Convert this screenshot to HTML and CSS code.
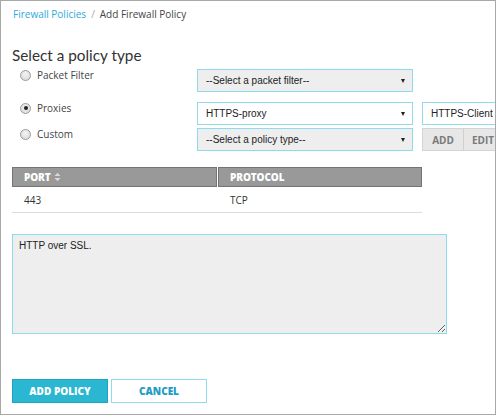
FILE: index.html
```html
<!DOCTYPE html>
<html>
<head>
<meta charset="utf-8">
<link rel="stylesheet" href="styles.css">
</head>
<body>
<div class="frame">
  <nav class="crumbs"><a class="crumb-link">Firewall Policies</a><span class="crumb-sep">/</span><span class="crumb-current">Add Firewall Policy</span></nav>
  <h1 class="title">Select a policy type</h1>
  <div class="policy">
    <div class="prow prow-1">
      <label class="radio-row"><span class="radio"></span><span class="radio-label">Packet Filter</span></label>
      <div class="select select-gray"><span>--Select a packet filter--</span><span class="caret"></span></div>
    </div>
    <div class="prow prow-2">
      <label class="radio-row"><span class="radio checked"></span><span class="radio-label">Proxies</span></label>
      <div class="select"><span>HTTPS-proxy</span><span class="caret"></span></div>
      <div class="text-input">HTTPS-Client</div>
    </div>
    <div class="prow prow-3">
      <label class="radio-row"><span class="radio"></span><span class="radio-label">Custom</span></label>
      <div class="select select-gray"><span>--Select a policy type--</span><span class="caret"></span></div>
      <div class="btn-group"><span class="small-btn">ADD</span><span class="small-btn">EDIT</span></div>
    </div>
  </div>

  <div class="table">
    <div class="thead">
      <div class="th th-port">PORT <span class="sort"><svg width="7" height="10" viewBox="0 0 7 10"><path d="M0.5 4 L3.5 0.8 L6.5 4 Z" fill="#d8d8d8"/><path d="M0.5 6 L3.5 9.2 L6.5 6 Z" fill="#d8d8d8"/></svg></span></div>
      <div class="th th-proto">PROTOCOL</div>
    </div>
    <div class="tr">
      <div class="td td-port">443</div>
      <div class="td td-proto">TCP</div>
    </div>
  </div>

  <textarea class="desc">HTTP over SSL.</textarea>

  <div class="actions">
    <button class="btn btn-primary">ADD POLICY</button>
    <button class="btn btn-secondary">CANCEL</button>
  </div>
</div>
</body>
</html>
```

FILE: styles.css
```css
* { box-sizing: border-box; }
html, body { margin: 0; padding: 0; background: #fff; }
body { width: 497px; height: 416px; overflow: hidden; }

.frame {
  width: 496px;
  height: 415px;
  border: 1px solid #a8a8a8;
  padding: 5px 0 0 11px;
  overflow: hidden;
  font-family: "Open Sans", "Liberation Sans", sans-serif;
  color: #333;
}

.crumbs {
  font-size: 10px;
  line-height: 16px;
  padding-left: 1px;
  display: flex;
  white-space: nowrap;
}
.crumb-link { color: #2ea8d8; }
.crumb-sep { color: #aaa; margin: 0 5px 0 5px; }
.crumb-current { color: #444; }

.title {
  margin: 23px 0 0 0;
  font-family: Lato, "Open Sans", sans-serif;
  font-weight: 400;
  font-size: 15.3px;
  line-height: 20px;
  color: #333;
  height: 20px;
}

.policy {
  margin-top: 4px;
  display: flex;
  flex-direction: column;
}
.prow {
  display: flex;
  align-items: flex-start;
  gap: 9px;
  height: 23px;
}
.prow-2 { margin-top: 10px; }
.prow-3 { margin-top: 3px; }

.radio-row {
  flex: none;
  width: 176px;
  display: flex;
  align-items: center;
  padding-left: 8px;
  height: 12px;
}
.radio {
  width: 11px;
  height: 11px;
  border-radius: 50%;
  border: 1px solid #9a9a9a;
  background: radial-gradient(circle at 50% 35%, #f4f4f4 0%, #d6d6d6 100%);
  position: relative;
  flex: none;
}
.radio.checked::after {
  content: "";
  position: absolute;
  left: 2.5px;
  top: 2.5px;
  width: 4px;
  height: 4px;
  border-radius: 50%;
  background: #222;
}
.radio-label {
  margin-left: 6px;
  font-size: 10px;
  color: #444;
  line-height: 12px;
}

.select {
  flex: none;
  width: 216px;
  height: 23px;
  border: 1px solid #8fdbeb;
  background: #fff;
  display: flex;
  align-items: center;
  justify-content: space-between;
  padding: 0 7px 0 8px;
  font-family: "Liberation Sans", Arial, sans-serif;
  font-size: 10px;
  color: #222;
}
.select-gray { background: #eeeeee; }
.caret {
  width: 0; height: 0;
  border-left: 2.5px solid transparent;
  border-right: 2.5px solid transparent;
  border-top: 4px solid #222;
  margin-top: 1px;
}

.text-input {
  flex: none;
  height: 23px;
  width: 120px;
  border: 1px solid #8fdbeb;
  background: #fff;
  display: flex;
  align-items: center;
  padding-left: 8px;
  font-family: "Liberation Sans", Arial, sans-serif;
  font-size: 10px;
  color: #222;
  white-space: nowrap;
}

.btn-group {
  flex: none;
  display: flex;
  height: 23px;
}
.small-btn {
  height: 23px;
  background: #e7e7e7;
  border: 1px solid #d4d4d4;
  border-right: none;
  color: #7a7a7a;
  font-weight: 700;
  font-size: 10px;
  display: flex;
  align-items: center;
  justify-content: center;
}
.small-btn:first-child { width: 41px; }
.small-btn:last-child { width: 60px; justify-content: flex-start; padding-left: 8px; border-left: 1px solid #d0d0d0; }

.table {
  margin-top: 16px;
  width: 410px;
}
.thead {
  display: flex;
  height: 20px;
  gap: 1px;
}
.th {
  background: #999999;
  border: 1px solid #747474;
  color: #fff;
  font-weight: 800;
  font-size: 10px;
  display: flex;
  align-items: center;
  padding-left: 11px;
  letter-spacing: -0.1px;
}
.th-port { width: 205px; }
.th-proto { flex: 1; }
.sort { display: inline-flex; margin-left: 3px; }
.tr {
  display: flex;
  gap: 1px;
  height: 26px;
  border-bottom: 1px solid #dcdcdc;
  font-size: 10px;
  color: #333;
}
.td {
  display: flex;
  align-items: center;
  padding-left: 12px;
}
.td-port { width: 205px; }
.td-proto { flex: 1; }

.desc {
  display: block;
  margin-top: 21px;
  width: 435px;
  height: 100px;
  border: 1px solid #8fdbeb;
  background: #eeeeee;
  font-family: "Liberation Sans", Arial, sans-serif;
  font-size: 10px;
  color: #222;
  padding: 5px 6px;
  outline: none;
  resize: both;
}

.actions {
  margin-top: 45px;
  display: flex;
  gap: 3px;
}
.btn {
  height: 24px;
  width: 96px;
  font-family: "Open Sans", sans-serif;
  font-weight: 800;
  font-size: 10px;
  padding: 0;
  cursor: pointer;
}
.btn-primary {
  background: #2bb6d2;
  border: 1px solid #1fa3c0;
  color: #fff;
}
.btn-secondary {
  background: #fff;
  border: 1px solid #8fdbeb;
  color: #219cc4;
}
```
